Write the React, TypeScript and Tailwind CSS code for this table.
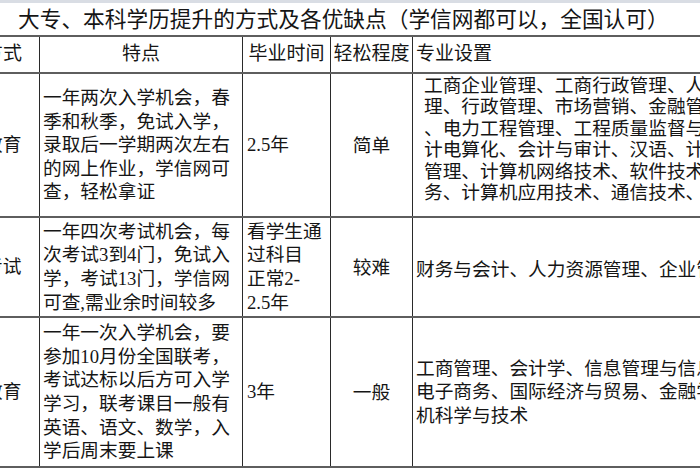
import type { ReactNode } from 'react';

const cjk = '[font-family:"Liberation_Serif","Noto_Sans_CJK_SC",serif]';

// Rows of the comparison table; the left and right columns are cut by the screenshot edge
const rows = [
  {
    method: '网络教育',
    height: 'h-[144px]',
    features: ['一年两次入学机会，春', '季和秋季，免试入学，', '录取后一学期两次左右', '的网上作业，学信网可', '查，轻松拿证'],
    time: ['2.5年'],
    level: '简单',
    majors: [
      '工商企业管理、工商行政管理、人力资源管',
      '理、行政管理、市场营销、金融管理、物流',
      '、电力工程管理、工程质量监督与管理、会',
      '计电算化、会计与审计、汉语、计算机信息',
      '管理、计算机网络技术、软件技术、电子商',
      '务、计算机应用技术、通信技术、法律',
    ],
    majorsClass: 'self-start pl-[11px] pt-[1px] leading-[21.4px]',
  },
  {
    method: '自学考试',
    height: 'h-[100px]',
    features: ['一年四次考试机会，每', '次考试3到4门，免试入', '学，考试13门，学信网', '可查,需业余时间较多'],
    time: ['看学生通', '过科目', '正常2-', '2.5年'],
    level: '较难',
    majors: ['财务与会计、人力资源管理、企业管理'],
    majorsClass: 'pl-[3px] pt-[6px] leading-[23.6px]',
  },
  {
    method: '成人教育',
    height: 'h-[150px]',
    features: ['一年一次入学机会，要', '参加10月份全国联考，', '考试达标以后方可入学', '学习，联考课目一般有', '英语、语文、数学，入', '学后周末要上课'],
    time: ['3年'],
    level: '一般',
    majors: ['工商管理、会计学、信息管理与信息系统、', '电子商务、国际经济与贸易、金融学、计算', '机科学与技术'],
    majorsClass: 'pl-[3px] leading-[23.6px]',
  },
];

function Row({ height, children }: { height: string; children: ReactNode }) {
  return <div className={`flex ${height} border-b-2 border-[#5e5e5e]`}>{children}</div>;
}

function Lines({ lines }: { lines: string[] }) {
  return (
    <div>
      {lines.map((l, i) => (
        <div key={i} className="whitespace-nowrap">
          {l}
        </div>
      ))}
    </div>
  );
}

export default function App() {
  return (
    <div className={`h-[470px] w-[700px] overflow-hidden bg-white text-[#151515] ${cjk}`}>
      <div className="h-[3px] bg-[#d9dde4]" />

      {/* Title */}
      <div className="flex h-[34px] items-center border-b-2 border-[#5e5e5e] pl-[18px] pt-[3px] text-[21.7px] whitespace-nowrap">
        大专、本科学历提升的方式及各优缺点（学信网都可以，全国认可）
      </div>

      <div className="-ml-[71px] w-[1100px]">
        {/* Header */}
        <Row height="h-[37px]">
          <div className="flex w-[110px] items-center justify-center text-[19px]">提升方式</div>
          <div className="flex w-[203px] items-center justify-center border-l border-[#2a2a2a] text-[19px]">特点</div>
          <div className="flex w-[88px] items-center justify-center border-l border-[#2a2a2a] text-[19px]">毕业时间</div>
          <div className="flex w-[82px] items-center justify-center border-l border-[#2a2a2a] text-[19px]">轻松程度</div>
          <div className="flex flex-1 items-center border-l border-[#2a2a2a] pl-[3px] text-[19px]">专业设置</div>
        </Row>

        {rows.map((r) => (
          <Row key={r.method} height={r.height}>
            <div className="flex w-[110px] items-center justify-center text-[18.7px]">{r.method}</div>
            <div className="flex w-[203px] items-center border-l border-[#2a2a2a] pl-[3px] text-[18.7px] leading-[23.6px]">
              <Lines lines={r.features} />
            </div>
            <div className="flex w-[88px] items-center border-l border-[#2a2a2a] pl-[4px] text-[18.7px] leading-[23.6px]">
              <Lines lines={r.time} />
            </div>
            <div className="flex w-[82px] items-center justify-center border-l border-[#2a2a2a] pt-[3px] text-[18.7px]">{r.level}</div>
            <div className="flex flex-1 items-center overflow-hidden border-l border-[#2a2a2a] text-[18.7px]">
              <div className={r.majorsClass}>
                <Lines lines={r.majors} />
              </div>
            </div>
          </Row>
        ))}
      </div>
    </div>
  );
}
